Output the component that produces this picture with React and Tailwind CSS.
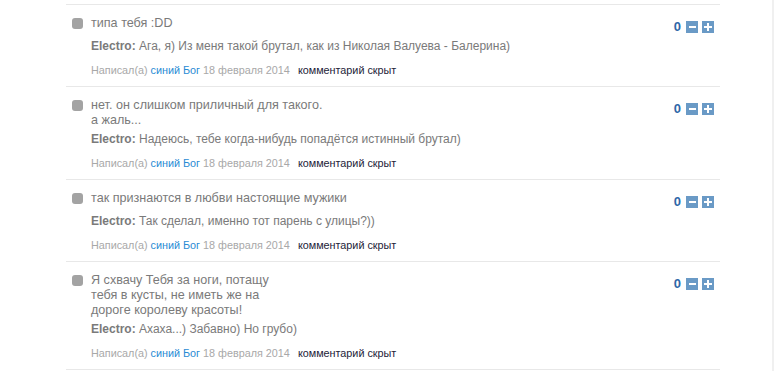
import React from 'react';

const comments = [
  {
    text: ['типа тебя :DD'],
    reply: 'Ага, я) Из меня такой брутал, как из Николая Валуева - Балерина)',
  },
  {
    text: ['нет. он слишком приличный для такого.', 'а жаль...'],
    reply: 'Надеюсь, тебе когда-нибудь попадётся истинный брутал)',
  },
  {
    text: ['так признаются в любви настоящие мужики'],
    reply: 'Так сделал, именно тот парень с улицы?))',
  },
  {
    text: ['Я схвачу Тебя за ноги, потащу', 'тебя в кусты, не иметь же на', 'дороге королеву красоты!'],
    reply: 'Ахаха...) Забавно) Но грубо)',
  },
];

function Vote() {
  return (
    <div className="flex items-center gap-[4px] self-start mt-[4px] shrink-0">
      <span className="text-[13px] leading-[13px] font-bold text-[#2f67a8] mr-[1px]">0</span>
      {/* minus */}
      <span className="w-[12px] h-[12px] bg-[#6a9ac6] flex items-center justify-center">
        <span className="w-[7px] h-[2px] bg-white" />
      </span>
      {/* plus */}
      <span className="w-[12px] h-[12px] bg-[#6a9ac6] relative flex items-center justify-center">
        <span className="w-[8px] h-[2px] bg-white" />
        <span className="absolute w-[2px] h-[8px] bg-white" />
      </span>
    </div>
  );
}

function Comment({ c }) {
  return (
    <div className="border-b border-[#e8e8e8] pl-[6px] pr-[6px] pt-[11px] pb-[8px] flex">
      <div className="w-[11px] h-[11px] rounded-[3px] bg-[#a3a3a3] mt-[2px] shrink-0" />
      <div className="flex-1 pl-[8px]">
        <div className="text-[12.6px] leading-[15px] min-h-[19px] text-[#7a7a7a]">
          {c.text.map((t, i) => (
            <div key={i}>{t}</div>
          ))}
        </div>
        <div className="text-[12px] leading-[16px] text-[#7a7a7a] mt-[3px]">
          <b className="font-bold">Electro:</b> {c.reply}
        </div>
        <div className="text-[10.8px] leading-[16px] mt-[8px]">
          <span className="text-[#a8a8a8]">Написал(а) </span>
          <span className="text-[#2a8bd4]">синий Бог</span>
          <span className="text-[#a8a8a8]"> 18 февраля 2014</span>
          <span className="text-[#1c1c38] ml-[8px]">комментарий скрыт</span>
        </div>
      </div>
      <Vote />
    </div>
  );
}

export default function App() {
  return (
    <div
      className="w-[775px] h-[371px] bg-white overflow-hidden flex"
      style={{ fontFamily: '"Liberation Sans", Arial, sans-serif' }}
    >
      <div className="w-[774px] border-r-2 border-[#f0f0f0] pl-[66px] pt-[4px]">
        <div className="w-[654px] border-t border-[#e8e8e8]">
          {comments.map((c, i) => (
            <Comment key={i} c={c} />
          ))}
        </div>
      </div>
    </div>
  );
}
